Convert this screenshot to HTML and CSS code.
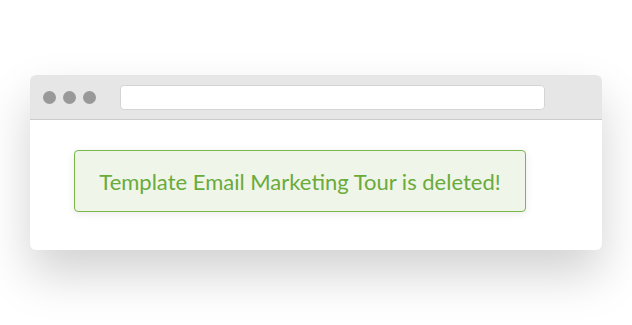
FILE: index.html
```html
<!DOCTYPE html>
<html lang="en">
  <head>
    <meta charset="UTF-8" />
    <title>Template deleted</title>
    <link rel="stylesheet" href="styles.css">
  </head>
  <body>
    <div class="browser">
      <div class="titlebar">
        <div class="dots">
          <span class="dot"></span>
          <span class="dot"></span>
          <span class="dot"></span>
        </div>
        <div class="address"></div>
      </div>
      <div class="content">
        <div class="alert">Template Email Marketing Tour is deleted!</div>
      </div>
    </div>
  </body>
</html>
```

FILE: styles.css
```css
html, body {
  height: 100%;
}
body {
  margin: 0;
  background-color: white;
  font-family: Lato, "Open Sans", sans-serif;
  padding-top: 75px;
  box-sizing: border-box;
}
.browser {
  margin-left: 30px;
  width: 572px;
  height: 175px;
  background-color: white;
  border-radius: 6px;
  overflow: hidden;
  box-shadow: 0 24px 48px rgba(0, 0, 0, 0.18);
}
.titlebar {
  height: 44px;
  background-color: #e6e6e6;
  border-bottom: 1px solid #cccccc;
  display: flex;
  align-items: center;
  padding: 0 57px 0 13px;
}
.dots {
  display: flex;
  gap: 7px;
  margin-right: 24px;
}
.dot {
  width: 13px;
  height: 13px;
  border-radius: 50%;
  background-color: #999999;
}
.address {
  flex: 1;
  height: 23px;
  background-color: white;
  border-radius: 4px;
  border: 1px solid #d4d4d4;
  margin-top: 1px;
}
.content {
  padding: 30px 44px;
}
.alert {
  width: 450px;
  height: 60px;
  background-color: #eff5e9;
  border: 1px solid #7ab648;
  border-radius: 4px;
  color: #6aab3a;
  font-size: 22px;
  display: flex;
  align-items: center;
  justify-content: center;
  box-shadow: 0 2px 8px rgba(0, 0, 0, 0.08);
}
```
